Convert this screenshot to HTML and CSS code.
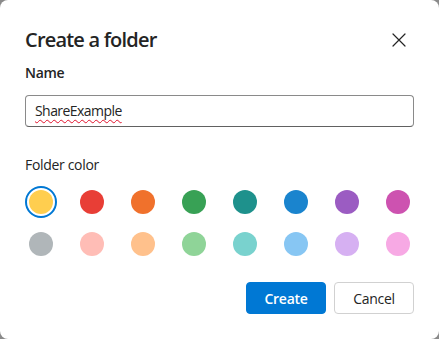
FILE: index.html
```html
<!DOCTYPE html>
<html lang="en">
<head>
<meta charset="utf-8">
<title>Create a folder</title>
<link rel="stylesheet" href="styles.css">
</head>
<body>
<div class="dialog">
  <div class="header">
    <h1 class="title">Create a folder</h1>
    <button class="close" aria-label="Close">
      <svg width="14" height="14" viewBox="0 0 14 14"><path d="M1 1 L13 13 M13 1 L1 13" stroke="#242424" stroke-width="1.2" fill="none" stroke-linecap="round"/></svg>
    </button>
  </div>
  <div class="label name-label">Name</div>
  <div class="input"><span class="misspelled">ShareExample</span></div>
  <div class="label color-label">Folder color</div>
  <div class="swatches">
    <div class="cell selected"><span class="dot c1"></span></div>
    <div class="cell"><span class="dot c2"></span></div>
    <div class="cell"><span class="dot c3"></span></div>
    <div class="cell"><span class="dot c4"></span></div>
    <div class="cell"><span class="dot c5"></span></div>
    <div class="cell"><span class="dot c6"></span></div>
    <div class="cell"><span class="dot c7"></span></div>
    <div class="cell"><span class="dot c8"></span></div>
    <div class="cell"><span class="dot c9"></span></div>
    <div class="cell"><span class="dot c10"></span></div>
    <div class="cell"><span class="dot c11"></span></div>
    <div class="cell"><span class="dot c12"></span></div>
    <div class="cell"><span class="dot c13"></span></div>
    <div class="cell"><span class="dot c14"></span></div>
    <div class="cell"><span class="dot c15"></span></div>
    <div class="cell"><span class="dot c16"></span></div>
  </div>
  <div class="actions">
    <button class="btn primary">Create</button>
    <button class="btn secondary">Cancel</button>
  </div>
</div>
</body>
</html>
```
FILE: styles.css
```css
* { box-sizing: border-box; }
html, body { margin: 0; padding: 0; }
body {
  background: #8a8a8a;
  width: 439px;
  height: 339px;
  overflow: hidden;
  font-family: "Segoe UI", "Open Sans", "Noto Sans", sans-serif;
  color: #242424;
  letter-spacing: -0.02em;
}
.dialog {
  width: 439px;
  height: 339px;
  background: #ffffff;
  border-radius: 8px;
  padding: 26px 25px 24px 25px;
  display: flex;
  flex-direction: column;
}
.header {
  display: flex;
  justify-content: space-between;
  align-items: center;
  height: 28px;
}
.title {
  margin: 0;
  font-size: 20px;
  font-weight: 600;
  line-height: 28px;
  letter-spacing: -0.04em;
}
.close {
  border: 0;
  background: none;
  padding: 0;
  width: 20px;
  height: 20px;
  display: flex;
  align-items: center;
  justify-content: center;
  margin-right: 5px;
}
.label {
  font-size: 14px;
  line-height: 20px;
}
.name-label {
  font-weight: 600;
  margin-top: 9px;
  margin-bottom: 12px;
}
.input {
  height: 32px;
  border: 1px solid #8a8a8a;
  border-bottom-color: #616161;
  border-radius: 4px;
  padding: 0 9px;
  font-size: 14px;
  line-height: 30px;
  letter-spacing: -0.04em;
}
.misspelled {
  text-decoration: underline wavy #e0112b;
  text-decoration-thickness: 1px;
  text-underline-offset: 3px;
}
.color-label {
  margin-top: 28px;
  margin-bottom: 11px;
}
.swatches {
  display: grid;
  grid-template-columns: repeat(8, 32px);
  justify-content: space-between;
  row-gap: 10px;
}
.cell {
  width: 32px;
  height: 32px;
  border-radius: 50%;
  display: flex;
  align-items: center;
  justify-content: center;
}
.cell.selected {
  border: 2px solid #0078d4;
}
.dot {
  width: 24px;
  height: 24px;
  border-radius: 50%;
  display: block;
}
.c1 { background: #ffce4f; }
.c2 { background: #e83e36; }
.c3 { background: #f0712c; }
.c4 { background: #38a155; }
.c5 { background: #1e918c; }
.c6 { background: #1a84ce; }
.c7 { background: #9b5cc2; }
.c8 { background: #cd52b0; }
.c9 { background: #b0b6b9; }
.c10 { background: #ffbdb6; }
.c11 { background: #ffc18c; }
.c12 { background: #8fd498; }
.c13 { background: #79d2ce; }
.c14 { background: #87c6f3; }
.c15 { background: #d6b0f2; }
.c16 { background: #f7a9e4; }
.actions {
  margin-top: 22px;
  display: flex;
  justify-content: flex-end;
  gap: 8px;
}
.btn {
  width: 80px;
  height: 32px;
  border-radius: 4px;
  font-family: inherit;
  font-size: 14px;
  font-weight: 600;
  letter-spacing: -0.02em;
}
.primary {
  background: #0078d4;
  color: #ffffff;
  border: 1px solid #0078d4;
}
.secondary {
  background: #ffffff;
  color: #242424;
  border: 1px solid #d1d1d1;
  font-weight: 400;
}
```
